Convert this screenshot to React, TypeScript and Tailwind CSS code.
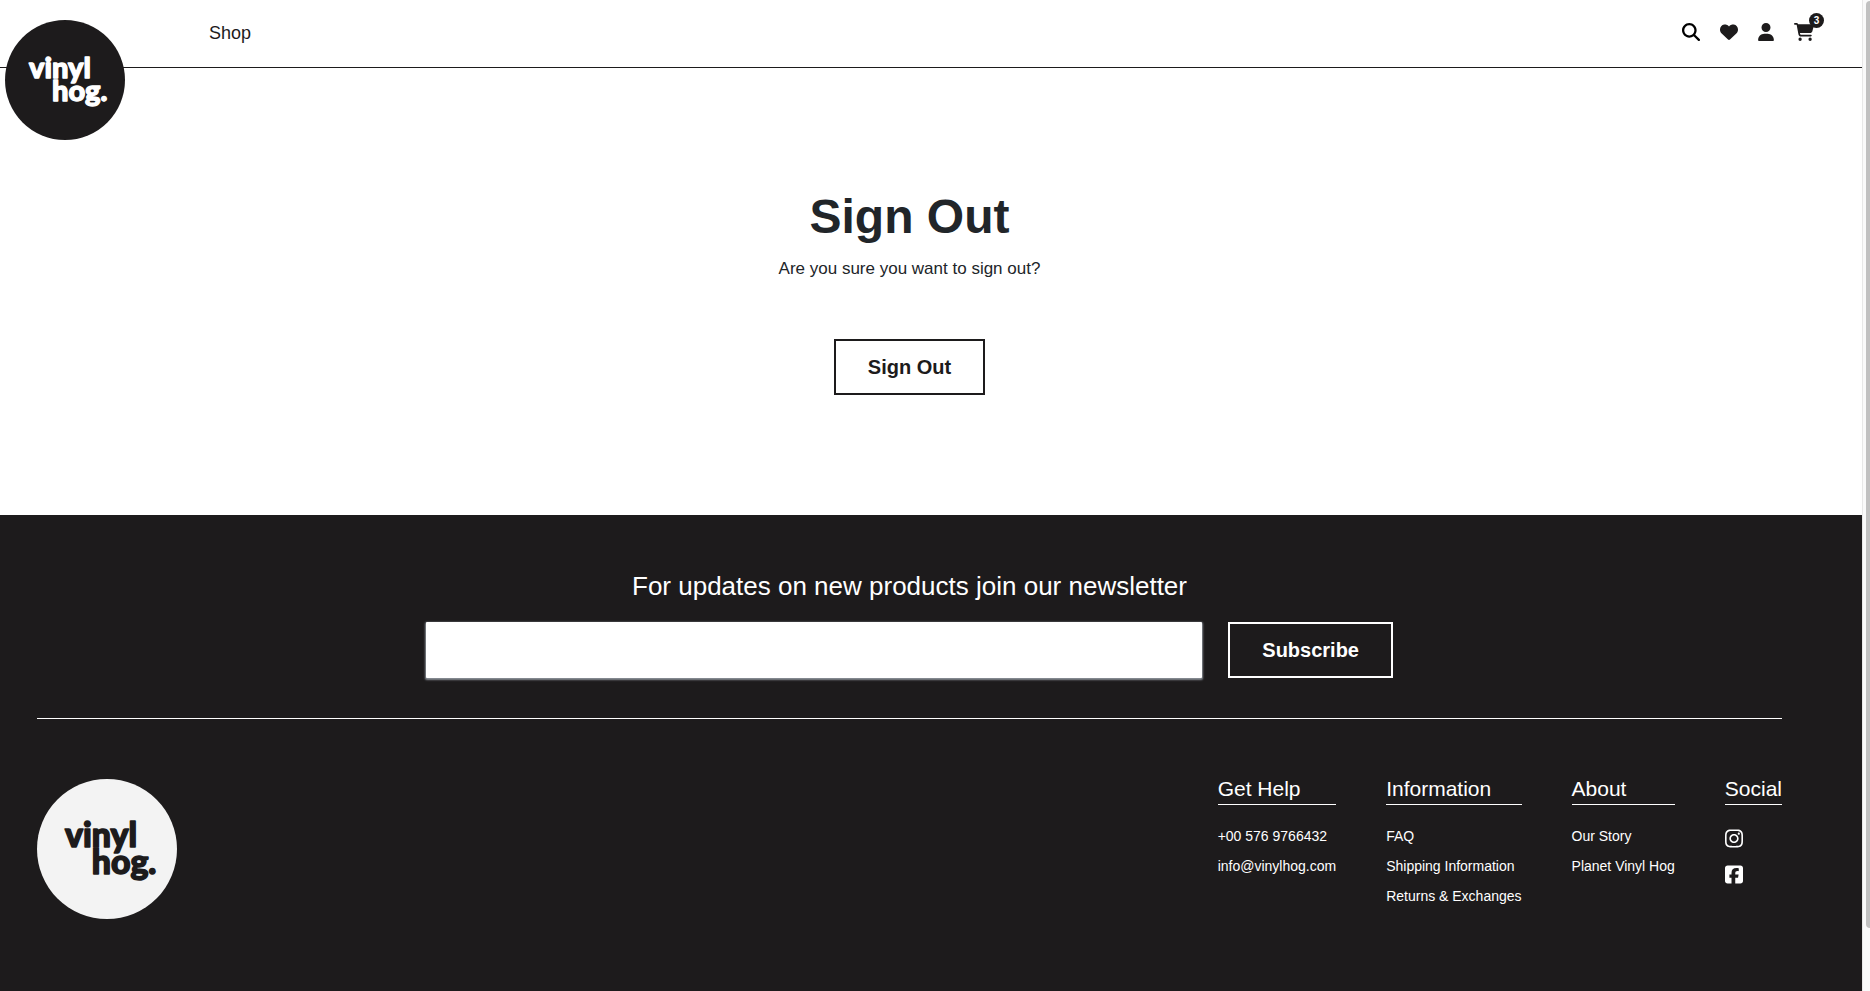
import type { ReactNode } from "react";
import {
  FaCartShopping,
  FaHeart,
  FaInstagram,
  FaMagnifyingGlass,
  FaSquareFacebook,
  FaUser,
} from "react-icons/fa6";

function Logo({ className }: { className: string }) {
  return (
    <svg viewBox="0 0 120 120" role="img" aria-label="Vinyl Hog" className={className}>
      <circle cx="60" cy="60" r="60" fill="currentColor" />
      <g
        className="fill-(--ink) stroke-(--ink) font-['Lato',sans-serif] font-black"
        fontSize="29"
        strokeWidth="1.3"
        strokeLinejoin="round"
      >
        <text x="24" y="58">vinyl</text>
        <text x="47" y="81">hog.</text>
      </g>
    </svg>
  );
}

function FooterColumn({ title, children }: { title: string; children: ReactNode }) {
  return (
    <section>
      <h3 className="border-b border-white pb-1.5 text-[21px] leading-[19px]">{title}</h3>
      <ul className="mt-[21px] flex flex-col gap-2.5 text-sm">{children}</ul>
    </section>
  );
}

export default function App() {
  return (
    <div className="flex min-h-screen bg-white font-['Liberation_Sans',Arial,sans-serif] text-[#1d1b1c]">
      <div className="flex min-w-0 flex-1 flex-col">
        <header className="flex h-[68px] items-start border-b border-[#1d1b1c] pr-12 pl-[5px]">
          <a href="#home" className="relative z-10 mt-5 shrink-0">
            <Logo className="size-[120px] text-[#1d1b1c] [--ink:#ffffff]" />
          </a>
          <nav className="mt-[21px] ml-[84px] flex-1">
            <a href="#shop" className="text-lg leading-6">Shop</a>
          </nav>
          <div className="mt-[23px] flex gap-5 text-lg">
            <button type="button" aria-label="Search" className="text-black"><FaMagnifyingGlass /></button>
            <a href="#wishlist" aria-label="Wishlist"><FaHeart /></a>
            <a href="#account" aria-label="Account"><FaUser className="w-4" /></a>
            <a href="#cart" aria-label="Cart, 3 items" className="relative">
              <FaCartShopping className="h-[18px] w-5" />
              <span className="absolute -top-2.5 -right-2.5 flex size-[15px] items-center justify-center rounded-full bg-[#1d1b1c] text-[10px] font-bold text-white">
                3
              </span>
            </a>
          </div>
        </header>

        <main className="flex flex-col items-center pt-[120px] pr-20 pb-[120px] pl-[37px]">
          <h1 className="text-5xl leading-[58px] font-bold text-[#212529]">Sign Out</h1>
          <p className="mt-[11px] text-[17px] leading-6 text-[#212529]">Are you sure you want to sign out?</p>
          <button type="button" className="mt-[58px] h-14 border-2 border-[#1d1b1c] px-8 text-xl font-bold">
            Sign Out
          </button>
        </main>

        <footer className="flex-1 bg-[#1d1b1c] pt-[55px] pr-20 pb-16 pl-[37px] text-white">
          <form className="flex flex-col items-center" onSubmit={(event) => event.preventDefault()}>
            <label htmlFor="newsletter-email" className="text-[26px] leading-8">
              For updates on new products join our newsletter
            </label>
            <div className="mt-5 flex w-full max-w-[967px] gap-[26px]">
              <input
                id="newsletter-email"
                type="email"
                className="h-14 min-w-0 flex-1 rounded-[1px] bg-white px-4 text-lg text-[#1d1b1c] shadow-[0_1px_2px_1px_#8a8f96]"
              />
              <button type="submit" className="h-14 border-2 border-white px-8 text-xl font-bold">
                Subscribe
              </button>
            </div>
          </form>

          <div className="mt-10 flex items-start justify-between border-t border-white pt-[60px]">
            <a href="#home">
              <Logo className="size-[140px] text-[#f3f3f3] [--ink:#1d1b1c]" />
            </a>
            <div className="flex gap-[50px]">
              <FooterColumn title="Get Help">
                <li><a href="tel:+005769766432">+00 576 9766432</a></li>
                <li><a href="mailto:info@vinylhog.com">info@vinylhog.com</a></li>
              </FooterColumn>
              <FooterColumn title="Information">
                <li><a href="#faq">FAQ</a></li>
                <li><a href="#shipping">Shipping Information</a></li>
                <li><a href="#returns">Returns &amp; Exchanges</a></li>
              </FooterColumn>
              <FooterColumn title="About">
                <li><a href="#story">Our Story</a></li>
                <li><a href="#planet">Planet Vinyl Hog</a></li>
              </FooterColumn>
              <FooterColumn title="Social">
                <li className="pt-0.5 pb-[5px]">
                  <a href="#instagram" aria-label="Instagram"><FaInstagram className="h-[21px] w-[18px]" /></a>
                </li>
                <li>
                  <a href="#facebook" aria-label="Facebook"><FaSquareFacebook className="h-[21px] w-[18px]" /></a>
                </li>
              </FooterColumn>
            </div>
          </div>
        </footer>
      </div>

      <div aria-hidden="true" className="sticky top-0 h-screen w-2 border-l border-[#e8e8e8] bg-[#fafafa] pt-px pl-[3px]">
        <div className="h-[93.6%] rounded-l bg-[#c1c1c1]" />
      </div>
    </div>
  );
}
